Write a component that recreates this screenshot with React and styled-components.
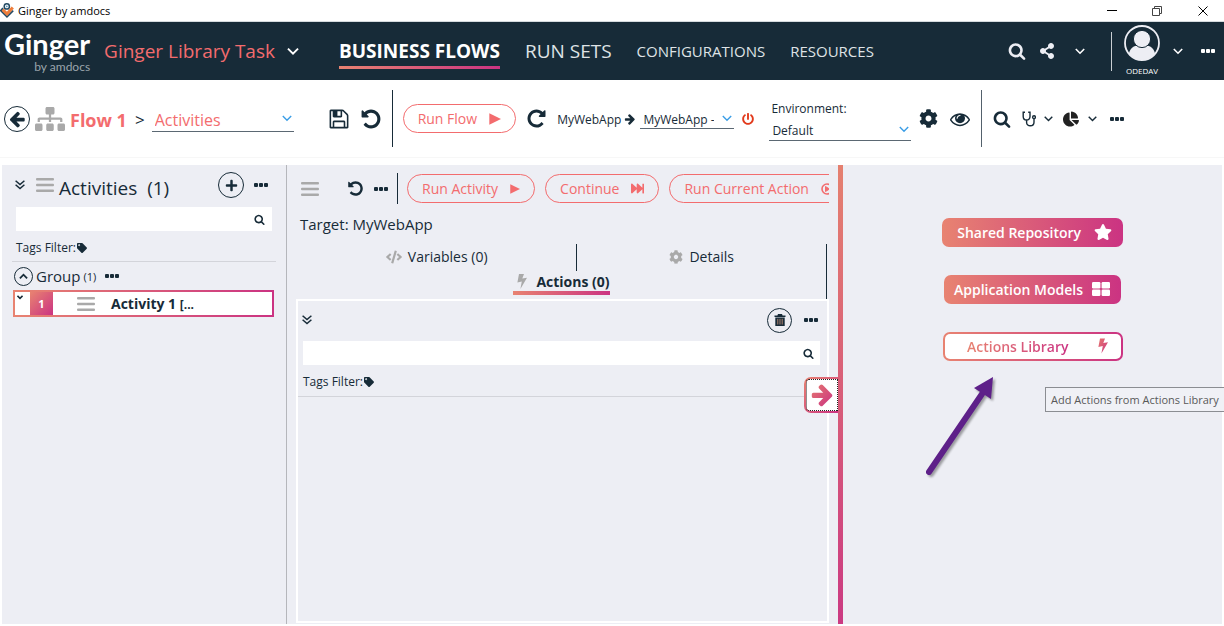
import React from "react";
import styled, { createGlobalStyle, css } from "styled-components";
import {
  FaCode,
  FaCog,
  FaChartPie,
  FaFastForward,
  FaPlus,
  FaPowerOff,
  FaShareAlt,
  FaSitemap,
  FaStar,
  FaTag,
} from "react-icons/fa";

const ink = "#172b38";
const coral = "#f36c6e";
const panel = "#edeef4";
const grey = "#a9a9a9";
const gradient = "linear-gradient(to right, #e88371, #cb3382)";
const diagonal = "linear-gradient(135deg, #e88371, #cb3382)";

const GlobalStyle = createGlobalStyle`
  *, *::before, *::after { box-sizing: border-box; }
  body {
    margin: 0;
    background: #fff;
    color: ${ink};
    font-family: "Open Sans", "Noto Sans", sans-serif;
    font-size: 12px;
  }
  button, input, select { font: inherit; color: inherit; }
  h1, h2, p, ul { margin: 0; padding: 0; font-weight: 400; }
  svg { display: block; flex: none; }
`;

/* ---------- icons ---------- */

const Glyph = ({ size, d, flip, fill = "currentColor" }) => (
  <svg width={size} height={size} viewBox="0 0 1792 1792" fill={fill} aria-hidden="true">
    <path d={d} transform={flip ? "translate(1792 0) scale(-1 1)" : undefined} />
  </svg>
);

const SEARCH =
  "M1216 832q0-185-131.5-316.5t-316.5-131.5-316.5 131.5-131.5 316.5 131.5 316.5 316.5 131.5 316.5-131.5 131.5-316.5zm512 832q0 52-38 90t-90 38q-54 0-90-38l-343-342q-179 124-399 124-143 0-273.5-55.5t-225-150-150-225-55.5-273.5 55.5-273.5 150-225 225-150 273.5-55.5 273.5 55.5 225 150 150 225 55.5 273.5q0 220-124 399l343 343q37 37 37 90z";
const UNDO =
  "M1664 896q0 156-61 298t-164 245-245 164-298 61q-172 0-327-72.5t-264-204.5q-7-10-6.5-22.5t8.5-20.5l137-138q10-9 25-9 16 2 23 12 73 95 179 147t225 52q104 0 198.5-40.5t163.5-109.5 109.5-163.5 40.5-198.5-40.5-198.5-109.5-163.5-163.5-109.5-198.5-40.5q-98 0-188 35.5t-160 101.5l137 138q31 30 14 69-17 40-59 40h-448q-26 0-45-19t-19-45v-448q0-42 40-59 39-17 69 14l130 129q107-101 244.5-156.5t284.5-55.5q156 0 298 61t245 164 164 245 61 298z";
const SAVE =
  "M512 1536h768v-384h-768v384zm896 0h128v-896q0-14-10-38.5t-20-34.5l-281-281q-10-10-34-20t-39-10v416q0 40-28 68t-68 28h-576q-40 0-68-28t-28-68v-416h-128v1280h128v-416q0-40 28-68t68-28h832q40 0 68 28t28 68v416zm-384-928v-320q0-13-9.5-22.5t-22.5-9.5h-192q-13 0-22.5 9.5t-9.5 22.5v320q0 13 9.5 22.5t22.5 9.5h192q13 0 22.5-9.5t9.5-22.5zm640 32v928q0 40-28 68t-68 28h-1344q-40 0-68-28t-28-68v-1344q0-40 28-68t68-28h928q40 0 88 20t76 48l280 280q28 28 48 76t20 88z";
const EYE =
  "M1664 960q-152-236-381-353 61 104 61 225 0 185-131.5 316.5t-316.5 131.5-316.5-131.5-131.5-316.5q0-121 61-225-229 117-381 353 133 205 333.5 326.5t434.5 121.5 434.5-121.5 333.5-326.5zm-720-384q0-20-14-34t-34-14q-125 0-214.5 89.5t-89.5 214.5q0 20 14 34t34 14 34-14 14-34q0-86 61-147t147-61q20 0 34-14t14-34zm848 384q0 34-20 69-140 230-376.5 368.5t-499.5 138.5-499.5-139-376.5-368q-20-35-20-69t20-69q140-229 376.5-368t499.5-139 499.5 139 376.5 368q20 35 20 69z";
const ARROW =
  "M1600 960q0 54-37 91l-651 651q-39 37-91 37-51 0-90-37l-75-75q-38-38-38-91t38-91l293-293h-704q-52 0-84.5-37.5t-32.5-90.5v-128q0-53 32.5-90.5t84.5-37.5h704l-293-294q-38-36-38-90t38-90l75-75q38-38 90-38 53 0 91 38l651 651q37 35 37 90z";

const Chevron = ({ size = 10, color = "currentColor", weight = 1.6, up }) => (
  <svg width={size} height={size} viewBox="0 0 10 10" fill="none" stroke={color} strokeWidth={weight} aria-hidden="true">
    <path d={up ? "M1 7l4-4 4 4" : "M.8 3l4.2 4.2L9.2 3"} />
  </svg>
);

const DoubleChevron = () => (
  <svg width="10" height="10" viewBox="0 0 10 10" fill="none" stroke="currentColor" strokeWidth="1.5" aria-hidden="true">
    <path d="M.6 .8L5 4.6 9.4 .8M.6 4.8L5 8.6l4.4-3.8" />
  </svg>
);

const Dots = () => (
  <svg width="14" height="4" viewBox="0 0 14 4" fill="currentColor" aria-hidden="true">
    <rect width="4" height="4" rx="1" />
    <rect x="5" width="4" height="4" rx="1" />
    <rect x="10" width="4" height="4" rx="1" />
  </svg>
);

const Bars = () => (
  <svg width="18" height="14" viewBox="0 0 18 14" fill={grey} aria-hidden="true">
    <rect width="18" height="2.4" rx="1" />
    <rect y="5.8" width="18" height="2.4" rx="1" />
    <rect y="11.6" width="18" height="2.4" rx="1" />
  </svg>
);

const Play = ({ size }) => (
  <svg width={size} height={size} viewBox="0 0 12 12" fill="currentColor" aria-hidden="true">
    <path d="M.3 .2L12 6 .3 11.8z" />
  </svg>
);

const Bolt = ({ fill = grey, height = 15 }) => (
  <svg width="10" height={height} viewBox="0 0 10 15" fill={fill} aria-hidden="true">
    <path d="M2 0H7L5.3 4.6 10 3.8 3.4 15 4.8 7.6 .4 8.6z" />
  </svg>
);

const IconGradient = () => (
  <svg width="0" height="0" style={{ position: "absolute" }} aria-hidden="true">
    <defs>
      <linearGradient id="iconFill" x1="0" x2="1" y1="0" y2="1">
        <stop offset="0" stopColor="#e5776f" />
        <stop offset="1" stopColor="#cb3382" />
      </linearGradient>
    </defs>
  </svg>
);

const Stethoscope = () => (
  <svg width="14" height="16" viewBox="0 0 14 16" fill="none" stroke="currentColor" strokeWidth="1.4" aria-hidden="true">
    <path d="M3 1.2H1.2v4.3c0 4.7 6.8 4.7 6.8 0V1.2H6.2M4.6 9v2.4c0 4.6 7.4 4.4 7.4-.2V7.6" />
    <circle cx="12" cy="6.2" r="1.4" />
  </svg>
);

const Trash = () => (
  <svg width="12" height="12" viewBox="0 0 12 12" aria-hidden="true">
    <path fill={ink} d="M4 0h4l.6 1.6h2.9V3H.5V1.6h2.9zM1.3 3.400h9.400V12H1.300z" />
    <path stroke="#b08470" strokeWidth="1" d="M3.800 4.800v5.700M6 4.800v5.700M8.200 4.800v5.700" />
  </svg>
);

const TargetIcon = () => (
  <svg width="12" height="12" viewBox="0 0 12 12" fill="none" stroke="currentColor" strokeWidth="1.6" aria-hidden="true">
    <circle cx="6" cy="6" r="5" />
    <path fill="currentColor" strokeWidth="1" d="M4.500 3.500L8.500 6l-4 2.500z" />
  </svg>
);

const Grid = () => (
  <svg width="18" height="14" viewBox="0 0 18 14" fill="currentColor" aria-hidden="true">
    <rect width="8.400" height="6.500" rx="1.200" />
    <rect x="9.600" width="8.400" height="6.500" rx="1.200" />
    <rect y="7.500" width="8.400" height="6.500" rx="1.200" />
    <rect x="9.600" y="7.500" width="8.400" height="6.500" rx="1.200" />
  </svg>
);

const AppIcon = () => (
  <svg width="14" height="15" viewBox="0 0 14 15" fill="none" aria-hidden="true">
    <path d="M3 5L.9 7.600 7 13.800l6.200-6.200" stroke="#234a63" strokeWidth="1.700" />
    <path d="M2.600 6.600L7 10.800l5.800-6.200" stroke="#ee7d3b" strokeWidth="3" />
    <circle cx="6.800" cy="3.400" r="2.600" fill="#fff" stroke="#234a63" strokeWidth="1.500" />
    <circle cx="6.800" cy="3.400" r=".9" fill="#5b9cc4" />
  </svg>
);

const Avatar = () => (
  <svg width="36" height="36" viewBox="0 0 36 36" aria-hidden="true">
    <defs>
      <clipPath id="face">
        <circle cx="18" cy="18" r="17" />
      </clipPath>
    </defs>
    <circle cx="18" cy="18" r="17" fill={ink} stroke={panel} strokeWidth="1.800" />
    <g clipPath="url(#face)" fill={panel}>
      <path d="M4 36c0-10 3.500-14.500 9-15.500 3 2 7 2 10 0 5.500 1 9 5.500 9 15.500z" />
      <circle cx="18" cy="14" r="8.600" stroke={ink} strokeWidth="1" />
    </g>
  </svg>
);

/* ---------- shared parts ---------- */

const IconButton = styled.button`
  display: inline-flex;
  flex: none;
  align-items: center;
  justify-content: center;
  padding: 0;
  margin-left: ${(p) => p.$ml || 0}px;
  border: 0;
  background: none;
  color: ${(p) => p.$color || "inherit"};
  cursor: pointer;
`;

const RoundButton = styled(IconButton)`
  width: ${(p) => p.$size}px;
  height: ${(p) => p.$size}px;
  border: 1px solid ${ink};
  border-radius: 50%;
`;

const PillButton = styled.button`
  display: inline-flex;
  flex: none;
  align-items: center;
  gap: 12px;
  height: 29px;
  padding: 0 14px;
  border: 1px solid ${coral};
  border-radius: 15px;
  background: none;
  color: ${coral};
  font-size: 14px;
  line-height: 20px;
  white-space: nowrap;
  cursor: pointer;
`;

const Divider = styled.span`
  flex: none;
  width: 1px;
  height: ${(p) => p.$height}px;
  margin: 0 ${(p) => p.$gap}px 0 ${(p) => p.$before || p.$gap}px;
  background: ${(p) => p.$color || ink};
`;

const SelectBox = styled.span`
  position: relative;
  flex: none;
  width: ${(p) => p.$width}px;
  margin-left: ${(p) => p.$ml || 0}px;
  border-bottom: 1px solid #5b6873;
  color: ${(p) => p.$color || ink};
  font-size: ${(p) => p.$size || 12}px;

  select {
    display: block;
    width: 100%;
    height: ${(p) => p.$height}px;
    padding: 3px 20px 0 3px;
    border: 0;
    background: none;
    appearance: none;
  }
  svg {
    position: absolute;
    right: 2px;
    top: 50%;
    margin-top: -5px;
    pointer-events: none;
  }
`;

const Select = ({ label, value, id, ...rest }) => (
  <SelectBox {...rest}>
    <select id={id} aria-label={label} defaultValue={value}>
      <option>{value}</option>
    </select>
    <Chevron color="#3a9de6" weight={1.4} />
  </SelectBox>
);

const SearchBox = styled.div`
  display: flex;
  align-items: center;
  height: 24px;
  padding-right: 7px;
  background: #fff;

  input {
    flex: 1;
    min-width: 0;
    height: 100%;
    padding: 0 6px;
    border: 0;
    background: none;
    outline: 0;
  }
`;

const TagsFilter = styled.div`
  display: flex;
  align-items: center;
  gap: 1px;
  line-height: 18px;
`;

/* ---------- window title bar ---------- */

const TitleBar = styled.div`
  display: flex;
  align-items: center;
  height: 22px;
  padding-right: 15px;
  border-bottom: 1px solid #d5dade;
  color: #000;
  font-size: 11px;
`;

const WindowTitle = styled.span`
  flex: 1;
  margin-left: 4px;
`;

const WindowButtons = styled.div`
  display: flex;
  gap: 33px;
`;

/* ---------- header ---------- */

const Header = styled.header`
  display: flex;
  align-items: center;
  height: 58px;
  padding: 0 9px 0 4px;
  background: ${ink};
  color: #fff;
  white-space: nowrap;
`;

const Logo = styled.div`
  display: flex;
  flex-direction: column;
  align-items: flex-end;
  font-family: Lato, sans-serif;
  font-size: 29px;
  font-weight: 700;
  line-height: 32px;

  small {
    color: #9ba5ac;
    font-size: 12px;
    font-weight: 400;
    line-height: 14px;
  }
`;

const Solution = styled.button`
  display: flex;
  align-items: center;
  gap: 12px;
  margin-left: 14px;
  padding: 0;
  border: 0;
  background: none;
  font-size: 19px;
  cursor: pointer;

  span { color: ${coral}; }
`;

const Nav = styled.nav`
  display: flex;
  flex: 1;
  align-items: center;
  gap: 25px;
  margin-left: 40px;
`;

const NavLink = styled.a`
  color: #dfe3e6;
  font-size: ${(p) => (p.$large ? 19 : 15)}px;
  line-height: 30px;
  text-decoration: none;
  ${(p) =>
    p.$active &&
    css`
      margin-top: 3px;
      border-bottom: 3px solid;
      border-image: ${gradient} 1;
      color: #fff;
      font-weight: 700;
    `}
`;

const User = styled.div`
  display: flex;
  flex-direction: column;
  align-items: center;
  gap: 4px;
  font-size: 8px;
  line-height: 12px;
`;

/* ---------- flow toolbar ---------- */

const FlowBar = styled.div`
  display: flex;
  align-items: center;
  height: 78px;
  padding-left: 4px;
  border-bottom: 1px solid #f7f7f7;
  white-space: nowrap;
`;

const FlowIcon = styled(FaSitemap)`
  margin-left: 5px;
`;

const FlowName = styled.h1`
  margin: 2px 8px 0 5px;
  color: ${coral};
  font-size: 18px;
  font-weight: 700;
`;

const Crumb = styled.span`
  margin-top: 2px;
  font-size: 17px;
`;

const AppName = styled.span`
  margin: 2px 3px 0 10px;
`;

const Environment = styled.div`
  display: flex;
  flex-direction: column;
  margin: 3px 8px 0 15px;

  label { line-height: 18px; padding-left: 2px; }
`;

/* ---------- work area ---------- */

const Page = styled.div`
  display: flex;
  flex-direction: column;
  min-height: 100vh;
`;

const Work = styled.main`
  display: grid;
  flex: 1;
  grid-template-columns: minmax(0, 285fr) minmax(0, 551fr) 5px minmax(0, 379fr);
  margin: 7px 2px 2px;
  background: ${panel};
`;

const ActivitiesPanel = styled.section`
  padding: 7px 10px 0;
  border-right: 1px solid #b5b6bb;
`;

const PanelHead = styled.div`
  display: flex;
  align-items: center;
  height: 26px;
  margin-bottom: 9px;
  padding: 0 8px 0 3px;
`;

const PanelTitle = styled.h2`
  flex: 1;
  margin: 6px 0 0 5px;
  font-size: 19px;
  white-space: pre;
`;

const ActivityTools = styled.div`
  padding: 0 4px 4px 4px;
  border-bottom: 1px solid #d3d4da;

  ${TagsFilter} { margin-top: 8px; }
`;

const GroupHead = styled.div`
  display: flex;
  align-items: center;
  gap: 3px;
  height: 28px;
  padding-left: 2px;
  font-size: 15px;

  small { margin-right: 6px; font-size: 11px; }
`;

const ActivityItem = styled.li`
  display: flex;
  align-items: center;
  height: 27px;
  margin: 0 2px 0 1px;
  padding-left: 2px;
  border: 2px solid;
  border-image: ${gradient} 1;
  background: #fff;
  list-style: none;
  font-size: 14px;
  font-weight: 700;

  > button { align-self: flex-start; margin-top: 2px; }
  > svg { margin: 0 16px 0 24px; }
  small { font-size: 12px; }
`;

const ActivityNumber = styled.span`
  display: grid;
  place-items: center;
  width: 23px;
  height: 23px;
  margin-left: 7px;
  background: ${diagonal};
  color: #fff;
  font-size: 11px;
`;

const ActivityPanel = styled.section`
  position: relative;
  display: flex;
  flex-direction: column;
  padding: 8px 9px 1px;
`;

const RunBar = styled.div`
  display: flex;
  align-items: center;
  padding-left: 5px;
  overflow: hidden;

  ${PillButton} + ${PillButton} { margin-left: 10px; }
`;

const Target = styled.p`
  margin: 9px 0 9px 4px;
  font-size: 15px;
  line-height: 22px;
`;

const Tabs = styled.div`
  display: flex;
  flex-wrap: wrap;
  align-content: flex-start;
  justify-content: center;
  height: 55px;
  margin: 0 2px 0 1px;
  border-right: 1px solid ${ink};
`;

const Tab = styled.button`
  display: flex;
  align-items: center;
  justify-content: center;
  gap: 6px;
  width: ${(p) => p.$width};
  height: 27px;
  padding: 0 0 2px;
  border: 0;
  border-right: ${(p) => (p.$divided ? `1px solid ${ink}` : 0)};
  background: none;
  font-size: 14px;
  cursor: pointer;

  ${(p) =>
    p.$active &&
    css`
      gap: 9px;
      height: 24px;
      padding: 0 0 0 4px;
      border-bottom: 4px solid;
      border-image: ${gradient} 1;
      font-weight: 700;
    `}
`;

const ActionsBox = styled.div`
  flex: 1;
  border: 2px solid #fff;

  ${TagsFilter} {
    margin-top: 8px;
    padding: 0 5px 5px;
    border-bottom: 1px solid #d3d4da;
  }
  ${SearchBox} { margin: 0 7px 0 5px; padding-right: 6px; }
`;

const ActionsHead = styled.div`
  display: flex;
  align-items: center;
  justify-content: space-between;
  height: 40px;
  padding: 0 9px 2px 4px;

  div { display: flex; align-items: center; gap: 12px; }
`;

const Expander = styled.button`
  position: absolute;
  right: 0;
  top: 50%;
  width: 34px;
  height: 36px;
  margin-top: -18px;
  padding: 0;
  border: 2px solid transparent;
  border-right: 0;
  border-radius: 7px 0 0 7px;
  background: linear-gradient(#fff, #fff) padding-box, ${diagonal} border-box;
  cursor: pointer;

  span {
    display: grid;
    place-items: center;
    height: 100%;
    border: 1px dotted #222;
    border-radius: 3px 0 0 3px;
  }
`;

const Splitter = styled.div`
  background: linear-gradient(#e5806f, #cb3a82);
`;

const AddPanel = styled.aside`
  position: relative;
  display: flex;
  flex-direction: column;
  align-items: center;
  gap: 28px;
  padding-top: 53px;
`;

const AddButton = styled.button`
  display: flex;
  align-items: center;
  justify-content: flex-end;
  gap: ${(p) => p.$gap}px;
  width: ${(p) => p.$width}px;
  height: 29px;
  padding: 0 ${(p) => p.$end}px 1px 0;
  border: 2px solid transparent;
  border-radius: 7px;
  background: ${(p) =>
    p.$outline
      ? `linear-gradient(#fff, #fff) padding-box, ${gradient} border-box`
      : `${gradient} border-box`};
  color: #fff;
  font-size: 14px;
  font-weight: 600;
  white-space: nowrap;
  cursor: pointer;

  span {
    ${(p) =>
      p.$outline &&
      css`
        background: ${gradient};
        background-clip: text;
        color: transparent;
      `}
  }
`;

const Tooltip = styled.div`
  position: absolute;
  left: 202px;
  right: -2px;
  top: 222px;
  height: 25px;
  padding-left: 5px;
  overflow: hidden;
  border: 1px solid #8b8d92;
  border-right: 0;
  background: #f0f1f6;
  color: #595959;
  font-size: 11px;
  line-height: 24px;
  white-space: nowrap;
`;

const Pointer = styled.svg`
  position: absolute;
  left: 79px;
  top: 208px;
  overflow: visible;
  filter: drop-shadow(2px 2px 1px rgba(0, 0, 0, 0.35));
`;

export default function App() {
  return (
    <Page>
      <GlobalStyle />
      <IconGradient />
      <TitleBar>
        <AppIcon />
        <WindowTitle>Ginger by amdocs</WindowTitle>
        <WindowButtons>
          <IconButton aria-label="Minimize">
            <svg width="12" height="12" viewBox="0 0 12 12" stroke="#000"><path d="M0 5.500h10" /></svg>
          </IconButton>
          <IconButton aria-label="Restore">
            <svg width="12" height="12" viewBox="0 0 12 12" fill="none" stroke="#444"><path d="M.5 3.500h7v7h-7zM2.500 3.500v-2h7v7h-2" /></svg>
          </IconButton>
          <IconButton aria-label="Close">
            <svg width="12" height="12" viewBox="0 0 12 12" stroke="#000"><path d="M1.500 1.500l9 9M10.500 1.500l-9 9" /></svg>
          </IconButton>
        </WindowButtons>
      </TitleBar>

      <Header>
        <Logo>
          Ginger
          <small>by amdocs</small>
        </Logo>
        <Solution>
          <span>Ginger Library Task</span>
          <Chevron size={12} />
        </Solution>
        <Nav>
          <NavLink href="#flows" $large $active>BUSINESS FLOWS</NavLink>
          <NavLink href="#sets" $large>RUN SETS</NavLink>
          <NavLink href="#config">CONFIGURATIONS</NavLink>
          <NavLink href="#resources">RESOURCES</NavLink>
        </Nav>
        <IconButton aria-label="Search" $color={panel}><Glyph size={18} d={SEARCH} /></IconButton>
        <IconButton aria-label="Share" $ml={13} $color={panel}><FaShareAlt size={16} /></IconButton>
        <IconButton aria-label="More sharing" $ml={20}><Chevron /></IconButton>
        <Divider $height={39} $gap={12} $before={26} $color="#c9cfd3" />
        <User>
          <Avatar />
          ODEDAV
        </User>
        <IconButton aria-label="User menu" $ml={13}><Chevron /></IconButton>
        <IconButton aria-label="More" $ml={18}><Dots /></IconButton>
      </Header>

      <FlowBar>
        <RoundButton aria-label="Back" $size={26}><Glyph size={18} d={ARROW} flip /></RoundButton>
        <FlowIcon size={30} color={grey} />
        <FlowName>Flow 1</FlowName>
        <Crumb>&gt;</Crumb>
        <Select label="Flow view" value="Activities" $width={142} $height={26} $ml={7} $size={16} $color={coral} />
        <IconButton aria-label="Save" $ml={34}><Glyph size={22} d={SAVE} /></IconButton>
        <IconButton aria-label="Undo" $ml={10}><Glyph size={22} d={UNDO} /></IconButton>
        <Divider $height={57} $gap={10} />
        <PillButton>Run Flow <Play size={12} /></PillButton>
        <IconButton aria-label="Reset" $ml={10}><Glyph size={21} d={UNDO} flip /></IconButton>
        <AppName>MyWebApp</AppName>
        <Glyph size={12} d={ARROW} />
        <Select label="Agent" value="MyWebApp -" $width={94} $height={20} $ml={4} />
        <IconButton aria-label="Stop agent" $ml={8} $color="#e23a1c"><FaPowerOff size={12} /></IconButton>
        <Environment>
          <label htmlFor="environment">Environment:</label>
          <Select id="environment" value="Default" $width={142} $height={22} />
        </Environment>
        <IconButton aria-label="Settings"><FaCog size={19} /></IconButton>
        <IconButton aria-label="Show" $ml={12}><Glyph size={20} d={EYE} /></IconButton>
        <Divider $height={57} $gap={11} $color="#53616c" />
        <IconButton aria-label="Find"><Glyph size={18} d={SEARCH} /></IconButton>
        <IconButton aria-label="Analyze" $ml={11}><Stethoscope /></IconButton>
        <IconButton aria-label="Analyze options" $ml={8}><Chevron size={9} /></IconButton>
        <IconButton aria-label="Report" $ml={10} $color="#222"><FaChartPie size={16} /></IconButton>
        <IconButton aria-label="Report options" $ml={9}><Chevron size={9} /></IconButton>
        <IconButton aria-label="More actions" $ml={13}><Dots /></IconButton>
      </FlowBar>

      <Work>
        <ActivitiesPanel>
          <PanelHead>
            <IconButton aria-label="Collapse all"><DoubleChevron /></IconButton>
            <IconButton aria-label="Reorder" $ml={11}><Bars /></IconButton>
            <PanelTitle>{"Activities  (1)"}</PanelTitle>
            <RoundButton aria-label="Add activity" $size={26}><FaPlus size={13} /></RoundButton>
            <IconButton aria-label="Activity options" $ml={10}><Dots /></IconButton>
          </PanelHead>
          <ActivityTools>
            <SearchBox>
              <input type="text" aria-label="Search activities" />
              <IconButton aria-label="Search"><Glyph size={11} d={SEARCH} /></IconButton>
            </SearchBox>
            <TagsFilter>Tags Filter:<FaTag size={10} /></TagsFilter>
          </ActivityTools>
          <GroupHead>
            <RoundButton aria-label="Collapse group" $size={19}><Chevron size={9} up weight={2} /></RoundButton>
            <span>Group</span>
            <small>(1)</small>
            <IconButton aria-label="Group options"><Dots /></IconButton>
          </GroupHead>
          <ul>
            <ActivityItem>
              <IconButton aria-label="Expand activity"><Chevron size={6} weight={2.5} /></IconButton>
              <ActivityNumber>1</ActivityNumber>
              <Bars />
              <span>Activity 1 <small>[...</small></span>
            </ActivityItem>
          </ul>
        </ActivitiesPanel>

        <ActivityPanel>
          <RunBar>
            <IconButton aria-label="Reorder"><Bars /></IconButton>
            <IconButton aria-label="Undo" $ml={28}><Glyph size={17} d={UNDO} /></IconButton>
            <IconButton aria-label="More" $ml={10}><Dots /></IconButton>
            <Divider $height={31} $gap={9} />
            <PillButton>Run Activity <Play size={10} /></PillButton>
            <PillButton>Continue <FaFastForward size={13} /></PillButton>
            <PillButton>Run Current Action <TargetIcon /></PillButton>
          </RunBar>
          <Target>Target: MyWebApp</Target>
          <Tabs role="tablist">
            <Tab role="tab" $width="53%" $divided><FaCode size={16} color={grey} />Variables (0)</Tab>
            <Tab role="tab" $width="47%"><FaCog size={14} color={grey} />Details</Tab>
            <Tab role="tab" aria-selected="true" $active><Bolt />Actions (0)</Tab>
          </Tabs>
          <ActionsBox>
            <ActionsHead>
              <IconButton aria-label="Collapse all"><DoubleChevron /></IconButton>
              <div>
                <RoundButton aria-label="Delete all" $size={25}><Trash /></RoundButton>
                <IconButton aria-label="Action options"><Dots /></IconButton>
              </div>
            </ActionsHead>
            <SearchBox>
              <input type="text" aria-label="Search actions" />
              <IconButton aria-label="Search"><Glyph size={11} d={SEARCH} /></IconButton>
            </SearchBox>
            <TagsFilter>Tags Filter:<FaTag size={10} /></TagsFilter>
          </ActionsBox>
          <Expander aria-label="Hide add panel">
            <span><Glyph size={25} d={ARROW} fill="url(#iconFill)" /></span>
          </Expander>
        </ActivityPanel>

        <Splitter />

        <AddPanel>
          <AddButton $width={181} $gap={13} $end={9}><span>Shared Repository</span><FaStar size={18} /></AddButton>
          <AddButton $width={177} $gap={9} $end={9}><span>Application Models</span><Grid /></AddButton>
          <AddButton $width={180} $gap={29} $end={13} $outline><span>Actions Library</span><Bolt fill="url(#iconFill)" height={16} /></AddButton>
          <Pointer width="72" height="100" viewBox="0 0 72 100">
            <path d="M7 99L60 21" stroke="#5e2089" strokeWidth="6" strokeLinecap="round" />
            <path d="M71 4L52 15l17 11z" fill="#5e2089" />
          </Pointer>
          <Tooltip role="tooltip">Add Actions from Actions Library</Tooltip>
        </AddPanel>
      </Work>
    </Page>
  );
}
